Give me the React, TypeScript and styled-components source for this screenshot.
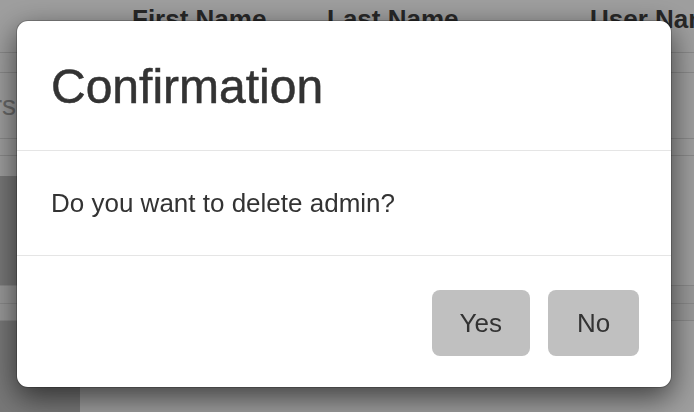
import * as React from 'react';
import styled, { createGlobalStyle } from 'styled-components';

const GlobalStyle = createGlobalStyle`
  html, body {
    margin: 0;
    padding: 0;
    width: 694px;
    height: 412px;
    overflow: hidden;
    background: #ffffff;
    font-family: "Liberation Sans", Arial, Helvetica, sans-serif;
    color: #333333;
  }
`;

// ---- page behind the dialog ----

export const Page = styled.div`
  width: 694px;
  height: 412px;
  overflow: hidden;
  background: #ffffff;
`;

export const HeadRow = styled.div`
  display: grid;
  grid-template-columns: 120px 195px 263px 1fr;
  height: 52px;
  border-bottom: 1px solid #dedede;
`;

export const HeadCell = styled.div`
  padding: 4px 0 0 12px;
  font-size: 26px;
  font-weight: 700;
  line-height: 30px;
  white-space: nowrap;
  color: #404040;
`;

export const Row = styled.div<{ $height: number; $tint?: boolean }>`
  display: flex;
  height: ${(p) => p.$height}px;
  border-bottom: 1px solid #dedede;
  background: ${(p) => (p.$tint ? '#f7f7f7' : '#ffffff')};
`;

export const SideLabel = styled.div`
  width: 16px;
  display: flex;
  align-items: center;
  justify-content: flex-end;
  white-space: nowrap;
  font-size: 28px;
  color: #a8a8a8;
`;

export const Thumb = styled.div<{ $top: number }>`
  width: 80px;
  margin-top: ${(p) => p.$top}px;
  background: #c2c2c2;
`;

// ---- dialog ----

export const Backdrop = styled.div`
  position: fixed;
  inset: 0;
  background: rgba(0, 0, 0, 0.38);
  padding: 20px 0 0 16px;
`;

export const Dialog = styled.div`
  width: 656px;
  box-sizing: border-box;
  background: #ffffff;
  border: 1px solid rgba(0, 0, 0, 0.2);
  border-radius: 12px;
  box-shadow: 0 10px 30px rgba(0, 0, 0, 0.6);
  background-clip: padding-box;
`;

export const Header = styled.div`
  padding: 40px 34px 36px;
  border-bottom: 1px solid #e5e5e5;
`;

export const Title = styled.h4`
  margin: 0;
  font-size: 48px;
  font-weight: 400;
  line-height: 1.1;
  color: #333333;
  -webkit-text-stroke: 0.5px #333333;
`;

export const Body = styled.div`
  padding: 34px 34px 33px;
  font-size: 26px;
  line-height: 37px;
  color: #333333;
`;

export const Footer = styled.div`
  display: flex;
  justify-content: flex-end;
  gap: 18px;
  padding: 34px 32px 31px;
  border-top: 1px solid #e5e5e5;
`;

export const Button = styled.button`
  min-width: 91px;
  height: 66px;
  padding: 0 28px;
  border: none;
  border-radius: 8px;
  background: #c0c0c0;
  color: #333333;
  font-family: inherit;
  font-size: 26px;
  line-height: 38px;
  cursor: pointer;
`;

const App: React.FC = () => (
  <>
    <GlobalStyle />
    <Page>
      <HeadRow>
        <HeadCell />
        <HeadCell>First Name</HeadCell>
        <HeadCell>Last Name</HeadCell>
        <HeadCell>User Name</HeadCell>
      </HeadRow>
      <Row $height={19} />
      <Row $height={65}>
        <SideLabel>Users</SideLabel>
      </Row>
      <Row $height={16} />
      <Row $height={129}>
        <Thumb $top={20} />
      </Row>
      <Row $height={17} $tint />
      <Row $height={16} $tint />
      <Row $height={100}>
        <Thumb $top={0} />
      </Row>
    </Page>
    <Backdrop>
      <Dialog role="dialog">
        <Header>
          <Title>Confirmation</Title>
        </Header>
        <Body>Do you want to delete admin?</Body>
        <Footer>
          <Button>Yes</Button>
          <Button>No</Button>
        </Footer>
      </Dialog>
    </Backdrop>
  </>
);

export default App;
